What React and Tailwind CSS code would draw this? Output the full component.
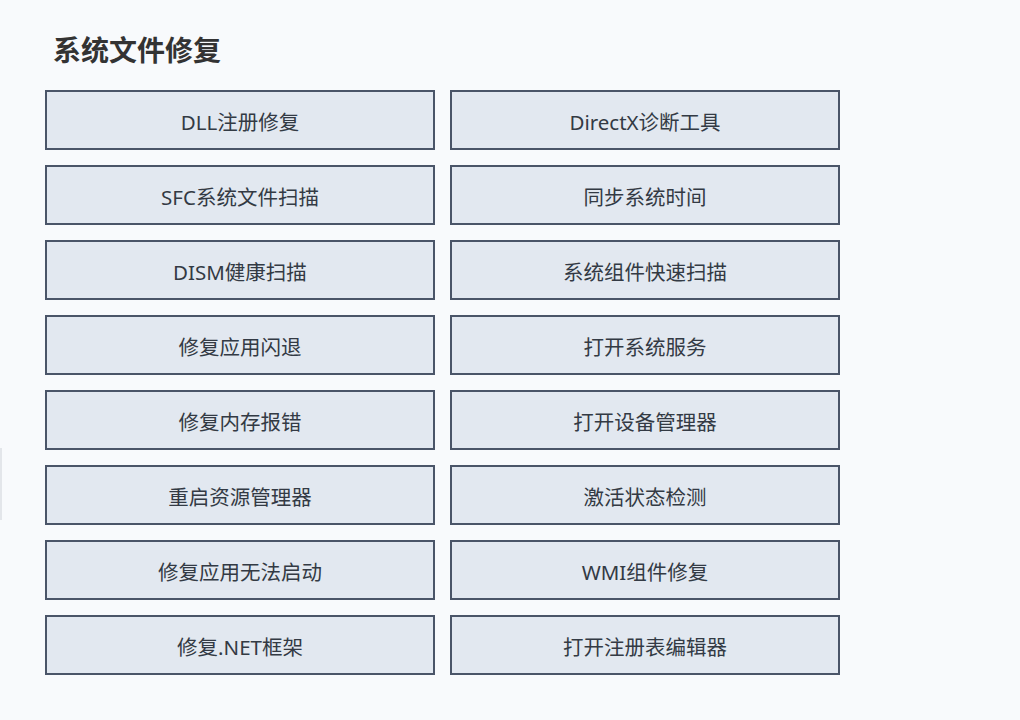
import React from "react";

const items = [
  "DLL注册修复",
  "DirectX诊断工具",
  "SFC系统文件扫描",
  "同步系统时间",
  "DISM健康扫描",
  "系统组件快速扫描",
  "修复应用闪退",
  "打开系统服务",
  "修复内存报错",
  "打开设备管理器",
  "重启资源管理器",
  "激活状态检测",
  "修复应用无法启动",
  "WMI组件修复",
  "修复.NET框架",
  "打开注册表编辑器",
];

export default function App() {
  return (
    <div
      className="relative w-[1020px] h-[720px] overflow-hidden bg-[#f8fafc] pl-[45px] pt-[32px]"
      style={{ fontFamily: '"Noto Sans", "Noto Sans CJK SC", sans-serif' }}
    >
      <div className="absolute left-0 top-[448px] h-[72px] w-[2px] bg-[#e3e6ea]" />
      <h1 className="pl-[8px] text-[28px] leading-[36px] font-bold text-[#333333]">
        系统文件修复
      </h1>
      <div className="mt-[22px] grid grid-cols-[390px_390px] gap-[15px]">
        {items.map((t) => (
          <button
            key={t}
            className="h-[60px] border-2 border-[#4a5568] bg-[#e2e8f0] pt-[4px] text-[20.5px] text-[#333a44] flex items-center justify-center"
          >
            {t}
          </button>
        ))}
      </div>
    </div>
  );
}
